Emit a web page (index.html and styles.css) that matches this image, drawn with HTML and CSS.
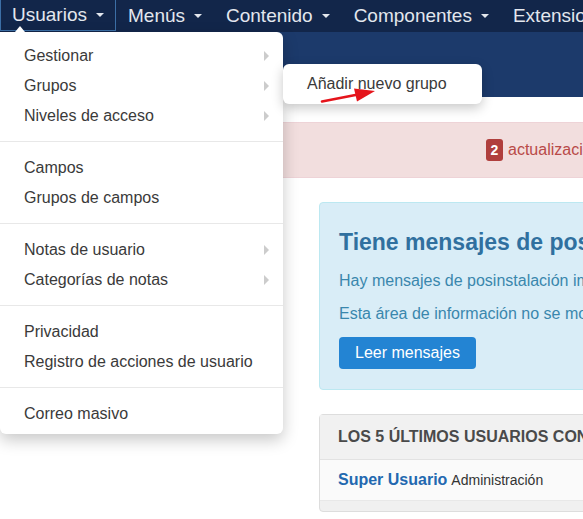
FILE: index.html
```html
<!DOCTYPE html>
<html lang="es">
<head>
<meta charset="utf-8">
<title>Usuarios</title>
<link rel="stylesheet" href="styles.css">
</head>
<body>
<nav class="navbar">
  <div class="nav-item active">Usuarios <span class="caret"></span></div>
  <div class="nav-item">Menús <span class="caret"></span></div>
  <div class="nav-item">Contenido <span class="caret"></span></div>
  <div class="nav-item">Componentes <span class="caret"></span></div>
  <div class="nav-item">Extensiones <span class="caret"></span></div>
</nav>
<header class="subhead"></header>
<div class="gap"></div>
<div class="alert"><span class="badge">2</span> actualizaciones disponibles</div>
<main class="content">
  <section class="info">
    <h2 class="info-title">Tiene mensajes de posinstalación</h2>
    <p class="info-text">Hay mensajes de posinstalación importantes que requieren su atención.</p>
    <p class="info-text">Esta área de información no se mostrará cuando haya ocultado todos los mensajes.</p>
    <button class="btn">Leer mensajes</button>
  </section>
  <section class="panel">
    <div class="panel-head">Los 5 últimos usuarios conectados</div>
    <div class="panel-row"><strong class="user">Super Usuario</strong> <span class="where">Administración</span></div>
    <div class="panel-foot"></div>
  </section>
</main>

<div class="dropdown">
  <div class="dd-item"><span>Gestionar</span><span class="sub-arrow"></span></div>
  <div class="dd-item"><span>Grupos</span><span class="sub-arrow"></span></div>
  <div class="dd-item"><span>Niveles de acceso</span><span class="sub-arrow"></span></div>
  <div class="divider"></div>
  <div class="dd-item"><span>Campos</span></div>
  <div class="dd-item"><span>Grupos de campos</span></div>
  <div class="divider"></div>
  <div class="dd-item"><span>Notas de usuario</span><span class="sub-arrow"></span></div>
  <div class="dd-item"><span>Categorías de notas</span><span class="sub-arrow"></span></div>
  <div class="divider"></div>
  <div class="dd-item"><span>Privacidad</span></div>
  <div class="dd-item"><span>Registro de acciones de usuario</span></div>
  <div class="divider"></div>
  <div class="dd-item"><span>Correo masivo</span></div>
</div>
<div class="submenu">Añadir nuevo grupo</div>
<svg class="red-arrow" width="583" height="519" viewBox="0 0 583 519">
  <line x1="322" y1="101.5" x2="358" y2="94.5" stroke="#e5141b" stroke-width="2.6" stroke-linecap="round"/>
  <polygon points="375,91 354,88.5 357,101.5" fill="#e5141b"/>
</svg>
</body>
</html>
```
FILE: styles.css
```css
html, body {
  margin: 0;
  padding: 0;
}
body {
  width: 583px;
  height: 519px;
  overflow: hidden;
  background: #ffffff;
  font-family: "Liberation Sans", Arial, sans-serif;
  position: relative;
}
.navbar {
  height: 32px;
  background: #12264a;
  display: flex;
  white-space: nowrap;
}
.nav-item {
  box-sizing: border-box;
  height: 32px;
  padding: 0 11px 0 11px;
  border: 1px solid transparent;
  border-top: 0;
  display: flex;
  align-items: center;
  color: #e3e7ee;
  font-size: 19px;
  flex: none;
}
.nav-item.active {
  border-color: #3c6fa6;
  height: 31px;
}
.caret {
  display: inline-block;
  width: 0;
  height: 0;
  margin-left: 9px;
  border-left: 4px solid transparent;
  border-right: 4px solid transparent;
  border-top: 4px solid #e3e7ee;
}
.subhead {
  height: 65px;
  background: #1c3a6b;
}
.gap {
  height: 25px;
}
.alert {
  box-sizing: border-box;
  height: 56px;
  background: #f2dede;
  border-top: 1px solid #eed3d7;
  border-bottom: 1px solid #eed3d7;
  padding-left: 486px;
  display: flex;
  align-items: center;
  color: #b94a48;
  font-size: 16px;
  white-space: nowrap;
}
.badge {
  display: inline-block;
  box-sizing: border-box;
  height: 22px;
  min-width: 17px;
  padding: 0 4px;
  margin-right: 5px;
  border-radius: 3px;
  background: #b03f3d;
  color: #fff;
  font-weight: bold;
  font-size: 14px;
  line-height: 22px;
  text-align: center;
}
.content {
  padding: 24px 0 0 319px;
  width: 600px;
}
.info {
  box-sizing: border-box;
  width: 600px;
  height: 188px;
  background: #d9edf7;
  border: 1px solid #bce8f1;
  border-radius: 4px;
  padding: 21px 19px 0;
  white-space: nowrap;
}
.info-title {
  margin: 0 0 10px;
  font-size: 23px;
  line-height: 36px;
  font-weight: bold;
  color: #30709f;
}
.info-text {
  margin: 0 0 11px;
  font-size: 16px;
  line-height: 22px;
  color: #3a87ad;
}
.btn {
  display: block;
  height: 32px;
  margin-top: 12px;
  padding: 0 16px;
  border: 0;
  border-radius: 4px;
  background: #2384d3;
  color: #ffffff;
  font-family: "Liberation Sans", Arial, sans-serif;
  font-size: 16px;
}
.panel {
  margin-top: 24px;
  width: 600px;
  box-sizing: border-box;
  border: 1px solid #dddddd;
  border-radius: 4px;
  background: #f0f0f0;
  white-space: nowrap;
}
.panel-head {
  height: 44px;
  padding-left: 18px;
  display: flex;
  align-items: center;
  font-weight: bold;
  font-size: 16px;
  text-transform: uppercase;
  color: #4a4a4a;
  background: #f1f1f1;
}
.panel-row {
  height: 40px;
  border-top: 1px solid #e2e2e2;
  background: #fafafa;
  padding-left: 18px;
  display: flex;
  align-items: center;
  gap: 4px;
}
.user {
  color: #2268b0;
  font-size: 16px;
}
.where {
  color: #333333;
  font-size: 14px;
}
.panel-foot {
  height: 10px;
  border-top: 1px solid #e8e8e8;
}
.dropdown {
  position: absolute;
  left: 0;
  top: 32px;
  width: 283px;
  box-sizing: border-box;
  padding: 9px 0 5px;
  background: #ffffff;
  border-radius: 0 6px 6px 6px;
  box-shadow: 0 6px 16px rgba(0, 0, 0, 0.22);
}
.dropdown::before {
  content: "";
  position: absolute;
  left: 15px;
  top: -6px;
  border-left: 5px solid transparent;
  border-right: 5px solid transparent;
  border-bottom: 6px solid #ffffff;
}
.dd-item {
  height: 30px;
  padding: 0 14px 0 24px;
  display: flex;
  align-items: center;
  justify-content: space-between;
  font-size: 16px;
  color: #3a3a3a;
  white-space: nowrap;
}
.sub-arrow {
  width: 0;
  height: 0;
  border-top: 5px solid transparent;
  border-bottom: 5px solid transparent;
  border-left: 5px solid #cccccc;
}
.divider {
  height: 1px;
  margin: 10px 0 11px;
  background: #e8e8e8;
}
.submenu {
  position: absolute;
  left: 283px;
  top: 64px;
  width: 199px;
  height: 40px;
  box-sizing: border-box;
  padding-left: 24px;
  display: flex;
  align-items: center;
  background: #ffffff;
  border-radius: 6px;
  box-shadow: 0 4px 12px rgba(0, 0, 0, 0.22);
  font-size: 16px;
  color: #3a3a3a;
  white-space: nowrap;
}
.red-arrow {
  position: absolute;
  left: 0;
  top: 0;
  pointer-events: none;
}
```
